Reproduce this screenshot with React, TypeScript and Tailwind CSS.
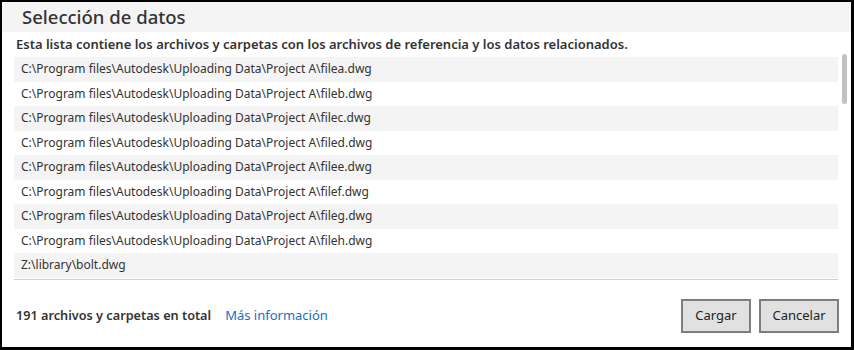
import React from 'react';

const files = [
  'C:\\Program files\\Autodesk\\Uploading Data\\Project A\\filea.dwg',
  'C:\\Program files\\Autodesk\\Uploading Data\\Project A\\fileb.dwg',
  'C:\\Program files\\Autodesk\\Uploading Data\\Project A\\filec.dwg',
  'C:\\Program files\\Autodesk\\Uploading Data\\Project A\\filed.dwg',
  'C:\\Program files\\Autodesk\\Uploading Data\\Project A\\filee.dwg',
  'C:\\Program files\\Autodesk\\Uploading Data\\Project A\\filef.dwg',
  'C:\\Program files\\Autodesk\\Uploading Data\\Project A\\fileg.dwg',
  'C:\\Program files\\Autodesk\\Uploading Data\\Project A\\fileh.dwg',
  'Z:\\library\\bolt.dwg',
];

export default function App() {
  return (
    <div
      className="flex h-[350px] w-[854px] flex-col border-t-2 border-r-[3px] border-b-[3px] border-l-2 border-black bg-white text-[#333333]"
      style={{ fontFamily: '"Noto Sans", "Open Sans", sans-serif' }}
    >
      {/* Header */}
      <div className="flex h-[30px] shrink-0 items-center bg-[#f4f4f4] pl-[20px] text-[18.5px] font-medium leading-none">
        Selección de datos
      </div>

      {/* List */}
      <div className="flex flex-col pl-[12px]">
        <div className="flex h-[25px] items-center pl-[2px] text-[13px] font-semibold leading-none">
          Esta lista contiene los archivos y carpetas con los archivos de referencia y los datos relacionados.
        </div>
        <div className="flex">
          <div className="flex w-[824px] flex-col border-b border-[#cfcfcf] pb-[1px]">
            {files.map((f, i) => (
              <div
                key={f}
                className={`flex h-[24.5px] items-center pl-[7px] text-[12px] leading-none ${
                  i % 2 === 0 ? 'bg-[#f4f4f4]' : 'bg-white'
                }`}
              >
                {f}
              </div>
            ))}
          </div>
          <div className="flex w-[13px] justify-center">
            <div className="mt-[-3px] h-[50px] w-[5px] rounded-full bg-[#c2c2c2]" />
          </div>
        </div>
      </div>

      {/* Footer */}
      <div className="flex flex-1 items-center justify-between pt-[5px] pr-[12px] pl-[14px]">
        <div className="flex items-center gap-[14px]">
          <span className="text-[12.7px] font-semibold">191 archivos y carpetas en total</span>
          <a href="#" className="text-[13px] text-[#1b6ec2]">
            Más información
          </a>
        </div>
        <div className="flex gap-[8px]">
          <button className="h-[34px] w-[70px] border-2 border-[#7d7d7d] bg-[#e1e1e1] text-[13px] text-[#222]">
            Cargar
          </button>
          <button className="h-[34px] w-[80px] border-2 border-[#7d7d7d] bg-[#e1e1e1] text-[13px] text-[#222]">
            Cancelar
          </button>
        </div>
      </div>
    </div>
  );
}
